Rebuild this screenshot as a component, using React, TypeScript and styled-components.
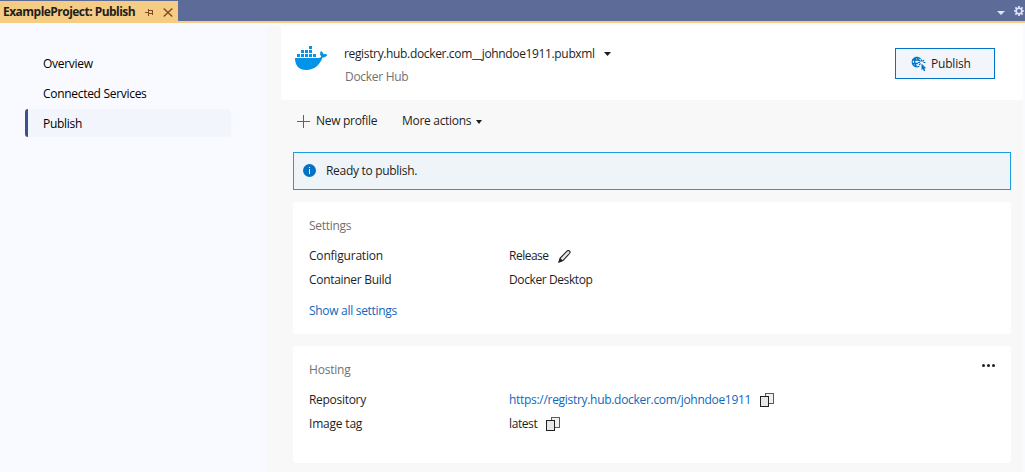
import React from "react";
import styled, { createGlobalStyle } from "styled-components";

const Global = createGlobalStyle`
  *, *::before, *::after { box-sizing: border-box; }
  body { margin: 0; background: #f9faff; }
`;

const Window = styled.div`
  width: 1025px;
  height: 472px;
  display: flex;
  flex-direction: column;
  overflow: hidden;
  background: #f9faff;
  color: #1e1e1e;
  font: 12px/16px "Open Sans", "Noto Sans", sans-serif;
`;

const TabStrip = styled.header`
  flex: none;
  height: 23px;
  padding-top: 1px;
  display: flex;
  align-items: stretch;
  justify-content: space-between;
  background: #5d6b99;
  border-bottom: 2px solid #f5cc84;
`;

const Tab = styled.div`
  width: 178px;
  height: 22px;
  padding: 0 5px 0 3px;
  display: flex;
  align-items: center;
  background: #f5cc84;
  font-weight: 700;
`;

const TabActions = styled.div`
  display: flex;
  align-items: center;
  gap: 9px;
  padding-right: 1px;

  & > svg:first-child {
    margin-top: 3px;
  }
`;

const Label = styled.span<{ $w?: number; $ls?: number; $muted?: boolean }>`
  display: block;
  flex: none;
  white-space: nowrap;
  width: ${(p) => (p.$w ? `${p.$w}px` : "auto")};
  letter-spacing: ${(p) => p.$ls ?? -0.3}px;
  color: ${(p) => (p.$muted ? "#717171" : "inherit")};
`;

const Body = styled.div`
  flex: 1;
  display: flex;
  min-height: 0;
`;

const Sidebar = styled.nav`
  width: 267px;
  padding: 26px 36px 0 25px;
  display: flex;
  flex-direction: column;
  gap: 2px;
`;

const NavItem = styled.a<{ $active?: boolean }>`
  height: 28px;
  padding: 2px 0 0 15px;
  display: flex;
  align-items: center;
  border-left: 3px solid ${(p) => (p.$active ? "#40508d" : "transparent")};
  border-radius: 3px;
  background: ${(p) => (p.$active ? "#f2f5fc" : "transparent")};
  color: #000;
`;

const Main = styled.main`
  width: 756px;
  margin-top: 3px;
  display: flex;
  flex-direction: column;
  background: #f8f8f8;
`;

const ProfileHeader = styled.section`
  height: 74px;
  margin-left: 14px;
  padding: 18px 28px 0 14px;
  display: flex;
  align-items: flex-start;
  background: #fff;
  border-radius: 0 0 4px 4px;
`;

const ProfileText = styled.div`
  flex: 1;
  margin-left: 16px;
  padding-top: 2px;
  display: flex;
  flex-direction: column;
  gap: 7px;
`;

const Inline = styled.div<{ $gap: number }>`
  display: flex;
  align-items: center;
  gap: ${(p) => p.$gap}px;
`;

const ProfileKind = styled.div`
  padding-left: 1px;
`;

const PublishButton = styled.button`
  width: 100px;
  height: 31px;
  margin-top: 4px;
  padding: 0 0 0 15px;
  display: flex;
  align-items: center;
  gap: 4px;
  border: 1px solid #0173c7;
  background: #f2f5fc;
  color: inherit;
  font: inherit;
`;

const Toolbar = styled.div`
  height: 52px;
  padding: 0 0 10px 30px;
  display: flex;
  align-items: center;
  gap: 24px;
`;

const MoreActions = styled.div`
  display: flex;
  align-items: center;
  gap: 5px;

  & > svg {
    margin-top: 2px;
  }
`;

const Content = styled.div`
  padding: 0 12px 0 26px;
  display: flex;
  flex-direction: column;
  gap: 12px;
`;

const Message = styled.div`
  height: 38px;
  padding: 0 0 1px 9px;
  display: flex;
  align-items: center;
  gap: 10px;
  border: 1px solid #1b9fe2;
  background: #eef4f7;
`;

const Card = styled.section<{ $h: number }>`
  height: ${(p) => p.$h}px;
  padding: 16px 16px 0;
  background: #fff;
  border-radius: 4px;
`;

const CardHead = styled.div`
  height: 26px;
  display: flex;
  justify-content: space-between;
  align-items: flex-start;

  & > svg {
    margin-top: 1px;
  }
`;

const Row = styled.div`
  height: 24px;
  display: grid;
  grid-template-columns: 200px 1fr;
  align-items: center;
`;

const Link = styled.a`
  color: #0f67bd;
`;

const CardFoot = styled.div`
  padding-top: 11px;
`;

const Caret = ({ w = 7, color = "#1e1e1e" }: { w?: number; color?: string }) => (
  <svg width={w} height="4" viewBox="0 0 8 4" preserveAspectRatio="none">
    <path d="M0 0H8L4 4Z" fill={color} />
  </svg>
);

const Whale = () => (
  <svg width="33" height="26" viewBox="0 0 33 26" fill="#0394ea">
    <path d="M0 14H23.5C25 14 26 13.4 26.2 12.6C24.8 11 24.7 8.7 26 7C27.5 7.8 28.3 9 28.4 10.2C30 9.8 31.3 10.1 32.4 10.8C31.5 12.7 29.7 13.6 27.5 13.6C24.8 21 19.5 26 11.3 26C4 26 0 22 0 14Z" />
    <path d="M2 10h3v3h-3zM6 10h3v3h-3zM10 10h3v3h-3zM14 10h3v3h-3zM18 10h3v3h-3zM6 6h3v3h-3zM10 6h3v3h-3zM14 6h3v3h-3zM14 2h3v3h-3z" />
  </svg>
);

const PublishIcon = () => (
  <svg width="16" height="16" viewBox="0 0 16 16" fill="none" stroke="#0173c7">
    <path d="M8.300 10.200A4.700 4.700 0 1 1 9.600 3.200M5.500 1C3 3.500 3 8 5.500 10.500M5.500 1C7 2.200 7.500 3.500 7.600 5M1 4H7.500M1 7.500H7" strokeWidth="1.300" />
    <path d="M10.500 3.500V5.500M7 6.500H9M12.500 6.500H14.500M8 4L9.500 5.500M13 4L11.500 5.500M8 9L9.500 7.500" strokeWidth="1.100" />
    <path d="M10.500 7.500L15.200 12.200H13.300L14.300 14.700L12.900 15.300L11.900 12.900L10.500 14.200Z" fill="#0173c7" stroke="none" />
  </svg>
);

const CopyIcon = () => (
  <svg width="14" height="14" viewBox="0 0 14 14" shapeRendering="crispEdges">
    <rect x="5.500" y="0.500" width="8" height="10" fill="#f0f0f0" stroke="#5b5b5b" />
    <rect x="0.500" y="3.500" width="8" height="10" fill="#e8e8e8" stroke="#212121" />
  </svg>
);

const PencilIcon = () => (
  <svg width="13" height="13" viewBox="0 0 13 13">
    <path d="M1 12L2.200 8L9 1.200C9.800 .4 10.700 .4 11.400 1C12.200 1.800 12.200 2.700 11.500 3.500L5 10.500Z" fill="#e4e4e4" stroke="#212121" strokeWidth="1.100" />
    <path d="M.5 12.500L2 8L5 10.600Z" fill="#212121" />
  </svg>
);

const PinIcon = () => (
  <svg width="9" height="7" viewBox="0 0 9 7" fill="none" stroke="#7b4c1d" shapeRendering="crispEdges">
    <path d="M0 3.500H3M3.500 0V7M4 1.500H7.500V5.500M4 4.500H8" />
  </svg>
);

const CloseIcon = () => (
  <svg width="10" height="9" viewBox="0 0 10 9" stroke="#7b4c1d" strokeWidth="1.400">
    <path d="M.7 .5L9.300 8.500M9.300 .5L.7 8.500" />
  </svg>
);

const GearIcon = () => (
  <svg width="10" height="10" viewBox="0 0 10 10" fill="none" stroke="#dfe4fa">
    <circle cx="5" cy="5" r="2.800" strokeWidth="1.600" />
    <path d="M5 0V2M5 8V10M0 5H2M8 5H10M1.400 1.400L2.800 2.800M7.200 7.200L8.600 8.600M8.600 1.400L7.200 2.800M2.800 7.200L1.400 8.600" strokeWidth="1.700" />
  </svg>
);

const PlusIcon = () => (
  <svg width="13" height="13" viewBox="0 0 13 13" fill="#1f8f24">
    <rect x="6" y="0" width="1" height="13" />
    <rect x="0" y="6" width="13" height="1" />
  </svg>
);

const InfoIcon = () => (
  <svg width="13" height="13" viewBox="0 0 13 13">
    <circle cx="6.500" cy="6.500" r="6.500" fill="#0173c7" />
    <path d="M6 3h1v1h-1zM6 5h1v5h-1z" fill="#fff" />
  </svg>
);

const MoreIcon = () => (
  <svg width="14" height="4" viewBox="0 0 14 4" fill="#1e1e1e">
    <circle cx="2.500" cy="2.500" r="1.500" />
    <circle cx="7.500" cy="2.500" r="1.500" />
    <circle cx="12.500" cy="2.500" r="1.500" />
  </svg>
);

export default function App() {
  return (
    <Window>
      <Global />
      <TabStrip>
        <Tab>
          <Label $w={142} $ls={-0.53}>ExampleProject: Publish</Label>
          <Inline $gap={9}>
            <PinIcon />
            <CloseIcon />
          </Inline>
        </Tab>
        <TabActions>
          <Caret w={8} color="#dfe4fa" />
          <GearIcon />
        </TabActions>
      </TabStrip>
      <Body>
        <Sidebar>
          <NavItem><Label>Overview</Label></NavItem>
          <NavItem><Label>Connected Services</Label></NavItem>
          <NavItem $active><Label>Publish</Label></NavItem>
        </Sidebar>
        <Main>
          <ProfileHeader>
            <Whale />
            <ProfileText>
              <Inline $gap={9}>
                <Label $w={251} $ls={-0.35}>registry.hub.docker.com__johndoe1911.pubxml</Label>
                <Caret />
              </Inline>
              <ProfileKind><Label $muted>Docker Hub</Label></ProfileKind>
            </ProfileText>
            <PublishButton>
              <PublishIcon />
              <Label $ls={-0.2}>Publish</Label>
            </PublishButton>
          </ProfileHeader>
          <Toolbar>
            <Inline $gap={6}>
              <PlusIcon />
              <Label $w={62}>New profile</Label>
            </Inline>
            <MoreActions>
              <Label $w={69}>More actions</Label>
              <Caret w={6} />
            </MoreActions>
          </Toolbar>
          <Content>
            <Message>
              <InfoIcon />
              <Label>Ready to publish.</Label>
            </Message>
            <Card $h={132}>
              <CardHead><Label $muted>Settings</Label></CardHead>
              <Row>
                <Label $ls={-0.2}>Configuration</Label>
                <Inline $gap={10}>
                  <Label $w={39} $ls={-0.5}>Release</Label>
                  <PencilIcon />
                </Inline>
              </Row>
              <Row>
                <Label>Container Build</Label>
                <Label $ls={-0.4}>Docker Desktop</Label>
              </Row>
              <CardFoot>
                <Link><Label>Show all settings</Label></Link>
              </CardFoot>
            </Card>
            <Card $h={117}>
              <CardHead>
                <Label $ls={-0.2} $muted>Hosting</Label>
                <MoreIcon />
              </CardHead>
              <Row>
                <Label>Repository</Label>
                <Inline $gap={9}>
                  <Link><Label $w={242}>https://registry.hub.docker.com/johndoe1911</Label></Link>
                  <CopyIcon />
                </Inline>
              </Row>
              <Row>
                <Label $ls={-0.2}>Image tag</Label>
                <Inline $gap={9}>
                  <Label $w={28} $ls={-0.4}>latest</Label>
                  <CopyIcon />
                </Inline>
              </Row>
            </Card>
          </Content>
        </Main>
      </Body>
    </Window>
  );
}
